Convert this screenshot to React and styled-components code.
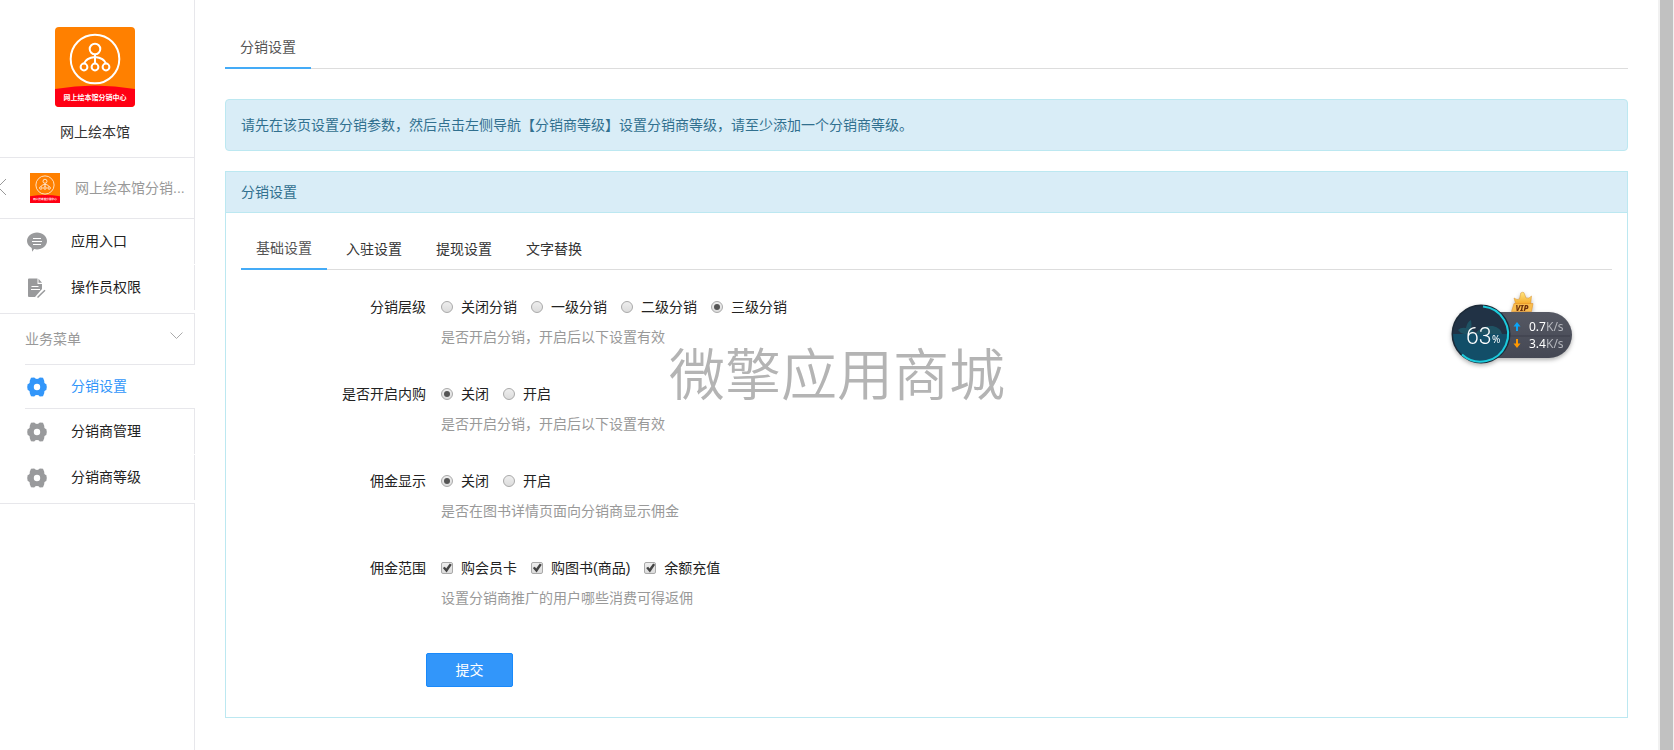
import React, { useState } from "react";
import styled, { createGlobalStyle } from "styled-components";

const GlobalStyle = createGlobalStyle`
  * {
    box-sizing: border-box;
  }

  body {
    margin: 0;
    background: #fff;
    color: #333;
    font-family: "Liberation Sans", "Noto Sans CJK SC", sans-serif;
    font-size: 14px;
    line-height: 20px;
  }

  a {
    color: inherit;
    text-decoration: none;
  }
`;

const Page = styled.div`
  display: flex;
  min-height: 100vh;
`;

const Sidebar = styled.aside`
  width: 195px;
  flex-shrink: 0;
  display: flex;
  flex-direction: column;
`;

const Brand = styled.div`
  display: flex;
  flex-direction: column;
  align-items: center;
  gap: 15px;
  padding: 27px 14px 15px 10px;
  border-right: 1px solid #e7e7eb;
  border-bottom: 1px solid #e7e7eb;
`;

const Logo = styled.svg`
  display: block;
  width: ${(props) => props.$size}px;
  height: ${(props) => props.$size}px;
  border-radius: ${(props) => (props.$rounded ? "4px" : "0")};
`;

const ModuleLink = styled.a`
  display: flex;
  align-items: center;
  height: 61px;
  border-right: 1px solid #e7e7eb;
  border-bottom: 1px solid #e7e7eb;
  color: #999;
`;

const BackArrow = styled.svg`
  width: 7px;
  height: 18px;
  margin-right: 23px;
`;

const ModuleName = styled.span`
  flex: 1;
  min-width: 0;
  margin-left: 15px;
  white-space: nowrap;
`;

const MenuList = styled.nav`
  padding-bottom: 2px;
  border-bottom: 1px solid #e7e7eb;
`;

const MenuItem = styled.a`
  display: flex;
  align-items: center;
  gap: 24px;
  height: 45px;
  margin-bottom: 1px;
  padding-left: 27px;
  border-right: 1px solid #e7e7eb;
  color: #222;
`;

const MenuText = styled.span`
  padding-bottom: 2px;
`;

const ActiveItem = styled(MenuItem)`
  margin: 0 0 0 25px;
  padding-left: 2px;
  border: solid #e7e7eb;
  border-width: 1px 0;
  color: #3296fa;
`;

const SectionTitle = styled.button`
  display: flex;
  align-items: center;
  justify-content: space-between;
  height: 50px;
  padding: 0 11px 0 25px;
  border: 0;
  border-right: 1px solid #e7e7eb;
  background: none;
  color: #999;
  font: inherit;
  cursor: pointer;
`;

const Chevron = styled.svg`
  width: 13px;
  height: 8px;
  margin-bottom: 6px;
`;

const SidebarRest = styled.div`
  flex: 1;
  border-right: 1px solid #e7e7eb;
`;

const Main = styled.main`
  flex: 1;
  min-width: 0;
  padding: 22px 30px 32px;
`;

const Tabs = styled.nav`
  display: flex;
  gap: 4px;
  height: 47px;
  border-bottom: 1px solid #ddd;
`;

const Tab = styled.a`
  height: 47px;
  padding: ${(props) => (props.$active ? "15px" : "16px")} 15px 0;
  border-bottom: 2px solid ${(props) => (props.$active ? "#44abf7" : "transparent")};
  color: ${(props) => (props.$active ? "#555" : "#333")};
`;

const Alert = styled.div`
  margin: 30px 0 20px;
  padding: 15px;
  border: 1px solid #bce8f1;
  border-radius: 4px;
  background: #d9edf7;
  color: #31708f;
`;

const Panel = styled.section`
  border: 1px solid #bce8f1;
`;

const PanelHeading = styled.h2`
  margin: 0;
  padding: 10px 15px;
  border-bottom: 1px solid #bce8f1;
  background: #d9edf7;
  color: #31708f;
  font-size: 14px;
  font-weight: inherit;
  line-height: 20px;
`;

const PanelBody = styled.div`
  padding: 10px 15px 30px;
`;

const Form = styled.form`
  padding-top: 27px;
`;

const Field = styled.fieldset`
  display: flex;
  gap: 15px;
  min-width: 0;
  margin: 0 0 37px;
  padding: 0;
  border: 0;
`;

const FieldLabel = styled.div`
  width: 185px;
  text-align: right;
  color: #222;
`;

const Options = styled.div`
  display: flex;
  gap: 14px;
  margin-bottom: 10px;
`;

const Option = styled.label`
  display: flex;
  align-items: center;
  gap: 8px;
  color: #222;
`;

const Choice = styled.input`
  appearance: none;
  display: grid;
  place-items: center;
  width: 12px;
  height: 12px;
  margin: 0;
  border: 1px solid #a9a9a9;
  border-radius: ${(props) => (props.type === "radio" ? "50%" : "2px")};
  background: linear-gradient(#eee, #dcdcdc);

  &[type="radio"]:checked::after {
    content: "";
    width: 6px;
    height: 6px;
    border-radius: 50%;
    background: #555;
  }

  &[type="checkbox"]:checked::after {
    content: "";
    width: 10px;
    height: 10px;
    background: #444;
    clip-path: polygon(8% 50%, 28% 38%, 42% 56%, 78% 4%, 98% 18%, 46% 94%);
  }
`;

const Help = styled.div`
  color: #999;
`;

const Submit = styled.button`
  display: block;
  min-width: 87px;
  height: 34px;
  margin: 45px 0 0 185px;
  padding: 0 28px;
  border: 1px solid #1989fa;
  border-radius: 2px;
  background: #3296fa;
  color: #fff;
  font: inherit;
  cursor: pointer;
`;

const ScrollTrack = styled.div`
  display: flex;
  width: 16px;
  padding: 0 1px 0 2px;
  background: #f1f1f1;
`;

const ScrollThumb = styled.div`
  flex: 1;
  background: #c1c1c1;
`;

const Watermark = styled.div`
  position: fixed;
  inset: 0;
  display: flex;
  align-items: center;
  justify-content: center;
  padding-top: 2px;
  color: #b4b4b4;
  font-size: 56px;
  font-weight: 350;
  line-height: 60px;
  pointer-events: none;
`;

const SpeedWidget = styled.div`
  position: fixed;
  top: 290px;
  right: 98px;
  width: 126px;
  height: 80px;
`;

const WidgetArt = styled.svg`
  display: block;
  width: 100%;
  height: 100%;
  font-family: "Noto Sans", sans-serif;
  filter: drop-shadow(0 2px 2px rgba(0, 0, 0, 0.3));
`;

const logoText = "网上绘本馆分销中心";

const BrandLogo = ({ size, rounded }) => (
  <Logo viewBox="0 0 80 80" $size={size} $rounded={rounded} role="img" aria-label={logoText}>
    <rect width="80" height="80" fill="#ff8000" />
    <path d="M0 62Q40 55 80 62V80H0Z" fill="#ff0014" />
    <g fill="none" stroke="#fff" strokeWidth="2">
      <circle cx="40" cy="32" r="24.3" />
      <circle cx="40" cy="22" r="5.3" />
      <circle cx="29" cy="40" r="3.4" />
      <circle cx="40" cy="40" r="3.4" />
      <circle cx="51" cy="40" r="3.4" />
      <path d="M40 27.5V36.5M29 36.5Q31 31 40 30Q49 31 51 36.5" />
    </g>
    <text x="40" y="73" textAnchor="middle" fontSize="7" fontWeight="700" fill="#fff">
      {logoText}
    </text>
  </Logo>
);

const ChatIcon = () => (
  <svg width="20" height="20" viewBox="0 0 20 20" fill="#999a9c">
    <path d="M10 .5C15.500.5 20 4.300 20 9s-4.500 8.500-10 8.500c-1 0-2-.1-2.900-.4L5.200 19.800l-.5-3.900C1.900 14.400 0 11.900 0 9 0 4.300 4.500.5 10 .5Z" />
    <path d="M6 6.500h8M5 9.500h10M6 12.500h8" stroke="#fff" strokeWidth="1.2" />
  </svg>
);

const FileIcon = () => (
  <svg width="20" height="20" viewBox="0 0 20 20" fill="#999a9c">
    <path d="M2 .5h8.500V6h4.500v5L8 19H2a1 1 0 0 1-1-1V1.500a1 1 0 0 1 1-1Z" />
    <path d="M11.500.8 15 4.800h-3.500ZM13.500 15.500 17.500 11.800 18.500 12.800 11 20 10 19Z" />
    <path d="M4.500 8.500h7M4 11.500h9" stroke="#fff" strokeWidth="1.2" />
  </svg>
);

const GearIcon = ({ color = "#999a9c" }) => (
  <svg width="20" height="20" viewBox="0 0 20 20">
    <path
      fillRule="evenodd"
      fill={color}
      d="M4 .8 7.200.6Q8.200 2 10 2T12.800.6L16 .8 17.300 4Q16.800 6.500 19.300 7L19.800 10 19.300 13Q16.800 13.500 17.300 16L16 19.200 12.800 19.400Q11.800 18 10 18T7.200 19.400L4 19.200 2.700 16Q3.200 13.500.7 13L.2 10 .7 7Q3.200 6.500 2.700 4ZM10 6.800a3.200 3.200 0 1 0 0 6.400a3.200 3.200 0 1 0 0-6.400Z"
    />
  </svg>
);

const NetSpeed = () => (
  <SpeedWidget>
    <WidgetArt viewBox="0 0 126 80">
      <defs>
        <linearGradient id="pill" x1="0" y1="0" x2="0" y2="1">
          <stop offset="0" stopColor="#555863" />
          <stop offset="1" stopColor="#454854" />
        </linearGradient>
        <linearGradient id="crown" x1="0" y1="0" x2="0" y2="1">
          <stop offset="0" stopColor="#ffe680" />
          <stop offset="1" stopColor="#f5a623" />
        </linearGradient>
        <clipPath id="dial">
          <circle cx="31" cy="44" r="28" />
        </clipPath>
      </defs>

      <path d="M40 22H99a23 23 0 0 1 0 46H40Z" fill="url(#pill)" />
      <path d="M58 46H120" stroke="#3c3f4a" />

      <circle cx="31" cy="44" r="29.500" fill="#1c2a38" />
      <g clipPath="url(#dial)">
        <rect width="62" height="44" fill="#213245" />
        <path d="M8 40Q11 37 16 38Q17 32 21 30Q22 35 21 38L26 44H14Q10 43 8 40Z" fill="#1e5263" />
        <path d="M25 44Q32 35 43 36Q51 38 52 44Z" fill="#1e5263" />
        <rect y="44" width="62" height="30" fill="#124e68" />
      </g>
      <path d="M33 16.500A27.600 27.600 0 1 1 12 64.500" fill="none" stroke="#1ccbdc" strokeWidth="2" />

      <text x="16" y="54" fill="#fff" fontSize="23" fontFamily="Roboto, sans-serif" fontWeight="300">
        63
      </text>
      <text x="42" y="53" fill="#fff" fontSize="10">%</text>

      <path d="M67 32 70.500 36.500H68V41H66V36.500H63.500Z" fill="#0ba5f7" />
      <path d="M66 49H68V53.500H70.500L67 58 63.500 53.500H66Z" fill="#ff9800" />
      <g fontSize="12" fill="#fff">
        <text x="79" y="41">0.7<tspan fill="#b4b6bc">K/s</tspan></text>
        <text x="79" y="58">3.4<tspan fill="#b4b6bc">K/s</tspan></text>
      </g>

      <path d="M66 15 64 8Q67.500 10.500 69.500 9L70.500 4.500A2 2 0 1 1 74.500 4L76 8Q79 9 81.500 6L80.500 15Z" fill="url(#crown)" stroke="#d9912b" strokeWidth=".5" />
      <path d="M64 13.500H83L81.500 21.500H61.500Z" fill="#f8bd4e" stroke="#e28a1e" strokeWidth=".5" />
      <text x="72" y="21" textAnchor="middle" fill="#6b2e0a" fontSize="8" fontWeight="800" fontStyle="italic">
        VIP
      </text>
    </WidgetArt>
  </SpeedWidget>
);

const fields = [
  {
    name: "level",
    label: "分销层级",
    type: "radio",
    options: ["关闭分销", "一级分销", "二级分销", "三级分销"],
    checked: ["三级分销"],
    help: "是否开启分销，开启后以下设置有效",
  },
  {
    name: "inner",
    label: "是否开启内购",
    type: "radio",
    options: ["关闭", "开启"],
    checked: ["关闭"],
    help: "是否开启分销，开启后以下设置有效",
  },
  {
    name: "show",
    label: "佣金显示",
    type: "radio",
    options: ["关闭", "开启"],
    checked: ["关闭"],
    help: "是否在图书详情页面向分销商显示佣金",
  },
  {
    name: "scope",
    label: "佣金范围",
    type: "checkbox",
    options: ["购会员卡", "购图书(商品)", "余额充值"],
    checked: ["购会员卡", "购图书(商品)", "余额充值"],
    help: "设置分销商推广的用户哪些消费可得返佣",
  },
];

const formTabs = ["基础设置", "入驻设置", "提现设置", "文字替换"];

const App = () => {
  const [activeTab, setActiveTab] = useState(formTabs[0]);

  return (
    <>
      <GlobalStyle />
      <Page>
        <Sidebar>
          <Brand>
            <BrandLogo size={80} rounded />
            <span>网上绘本馆</span>
          </Brand>
          <ModuleLink href="#module">
            <BackArrow viewBox="0 0 7 18" fill="none" stroke="#999">
              <path d="M6 0l-8 8 8 8" />
            </BackArrow>
            <BrandLogo size={30} />
            <ModuleName>网上绘本馆分销...</ModuleName>
          </ModuleLink>
          <MenuList>
            <MenuItem href="#entry">
              <ChatIcon />
              <MenuText>应用入口</MenuText>
            </MenuItem>
            <MenuItem href="#permission">
              <FileIcon />
              <MenuText>操作员权限</MenuText>
            </MenuItem>
          </MenuList>
          <SectionTitle type="button">
            业务菜单
            <Chevron viewBox="0 0 13 8" fill="none" stroke="#aaa">
              <path d="M.5.5l6 6 6-6" />
            </Chevron>
          </SectionTitle>
          <MenuList>
            <ActiveItem href="#setting">
              <GearIcon color="#3296fa" />
              <MenuText>分销设置</MenuText>
            </ActiveItem>
            <MenuItem href="#manage">
              <GearIcon />
              <MenuText>分销商管理</MenuText>
            </MenuItem>
            <MenuItem href="#grade">
              <GearIcon />
              <MenuText>分销商等级</MenuText>
            </MenuItem>
          </MenuList>
          <SidebarRest />
        </Sidebar>

        <Main>
          <Tabs>
            <Tab href="#setting" $active>分销设置</Tab>
          </Tabs>
          <Alert>
            请先在该页设置分销参数，然后点击左侧导航【分销商等级】设置分销商等级，请至少添加一个分销商等级。
          </Alert>
          <Panel>
            <PanelHeading>分销设置</PanelHeading>
            <PanelBody>
              <Tabs>
                {formTabs.map((tab) => (
                  <Tab key={tab} href={`#${tab}`} $active={tab === activeTab} onClick={() => setActiveTab(tab)}>
                    {tab}
                  </Tab>
                ))}
              </Tabs>
              <Form>
                {fields.map((field) => (
                  <Field key={field.name} aria-labelledby={`${field.name}-label`}>
                    <FieldLabel id={`${field.name}-label`}>{field.label}</FieldLabel>
                    <div>
                      <Options>
                        {field.options.map((option) => (
                          <Option key={option}>
                            <Choice type={field.type} name={field.name} defaultChecked={field.checked.includes(option)} />
                            {option}
                          </Option>
                        ))}
                      </Options>
                      <Help>{field.help}</Help>
                    </div>
                  </Field>
                ))}
                <Submit type="submit">提交</Submit>
              </Form>
            </PanelBody>
          </Panel>
        </Main>
        <ScrollTrack>
          <ScrollThumb />
        </ScrollTrack>
      </Page>
      <Watermark>微擎应用商城</Watermark>
      <NetSpeed />
    </>
  );
};

export default App;
